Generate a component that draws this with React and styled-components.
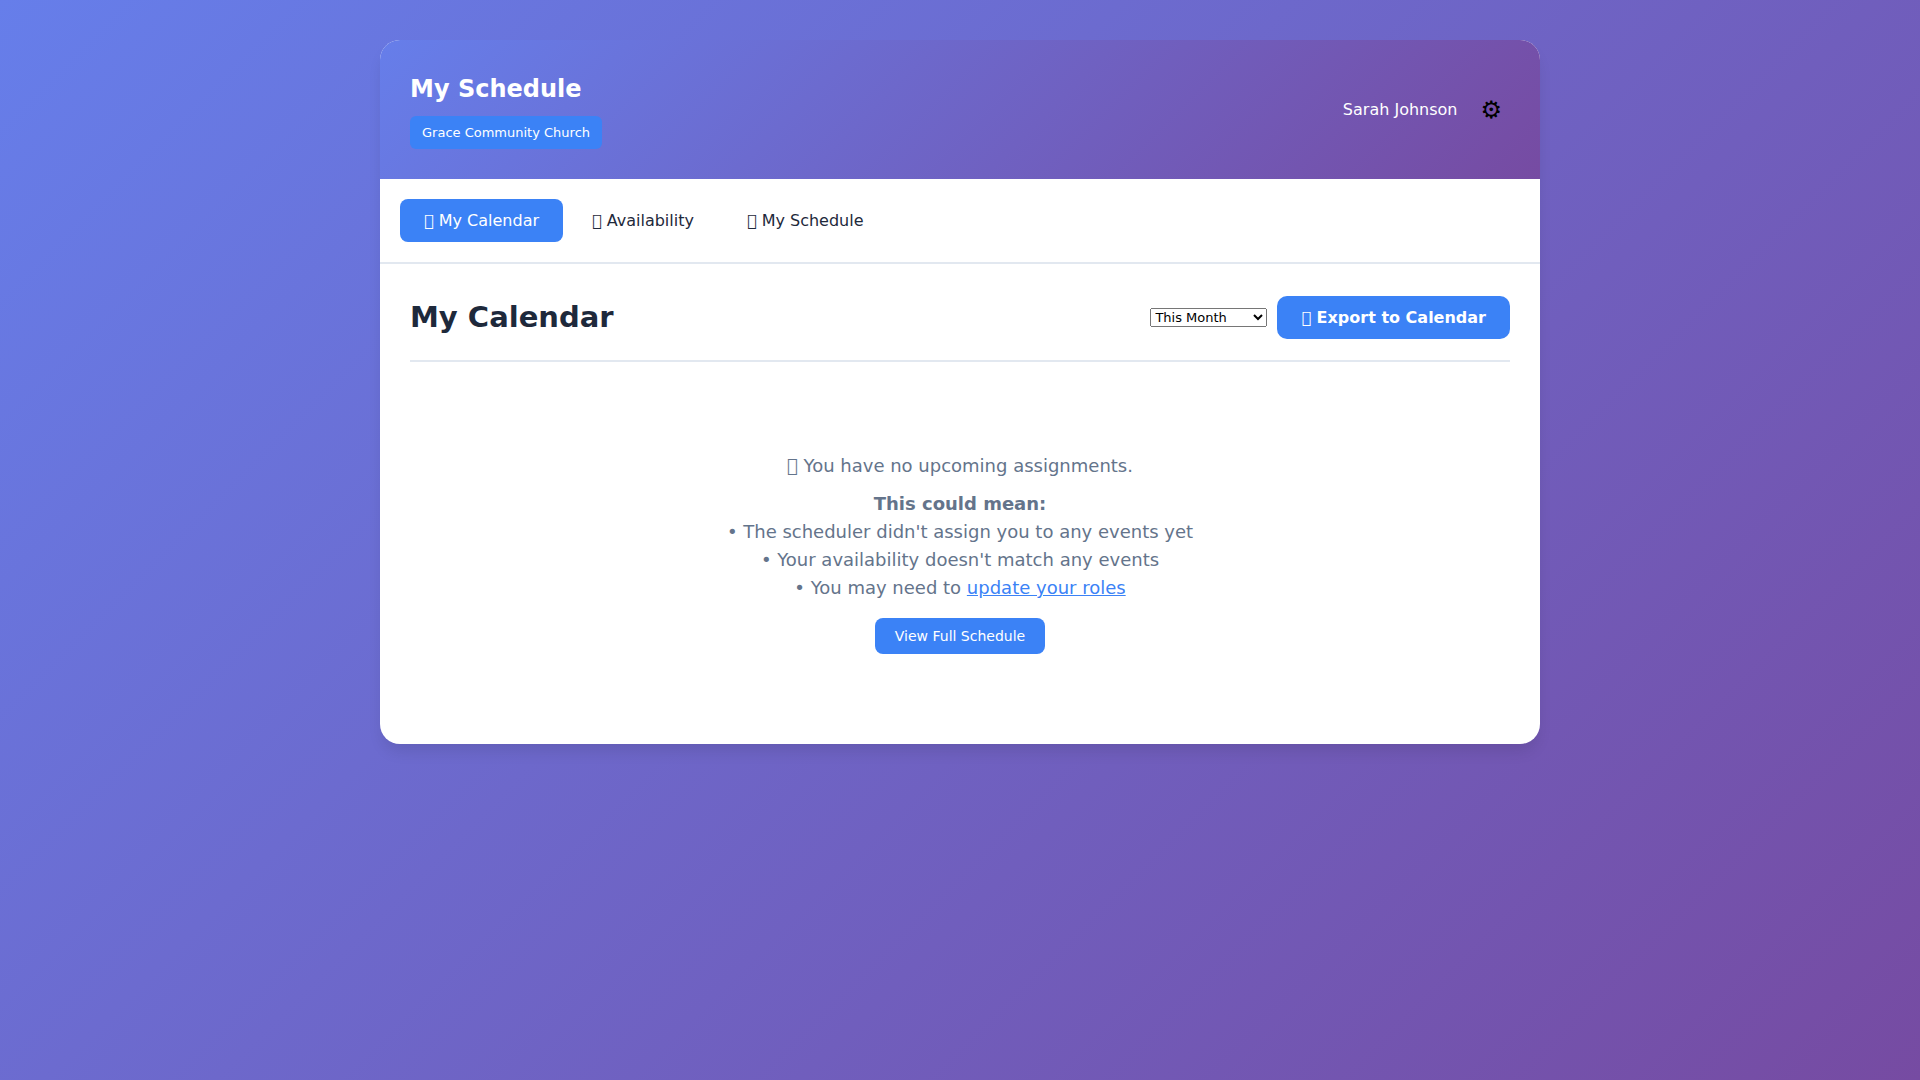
import React, { useState } from "react";
import styled, { createGlobalStyle } from "styled-components";

const GlobalStyle = createGlobalStyle`
  * {
    box-sizing: border-box;
    margin: 0;
    padding: 0;
  }

  body {
    min-height: 100vh;
    padding: 20px;
    background: linear-gradient(135deg, #667eea 0%, #764ba2 100%);
    color: #1e293b;
    font-family: "DejaVu Sans", sans-serif;
    font-size: 16px;
    line-height: 26px;
    text-rendering: optimizeLegibility;
  }

  button {
    border: none;
    cursor: pointer;
    font-family: inherit;
    line-height: normal;
    text-rendering: inherit;
  }
`;

const Container = styled.div`
  max-width: 1200px;
  margin: 0 auto;
  padding: 20px;
`;

const Card = styled.div`
  overflow: hidden;
  border-radius: 20px;
  background: #ffffff;
  box-shadow: 0 10px 15px -3px rgba(0, 0, 0, 0.1);
`;

const Header = styled.header`
  display: flex;
  align-items: center;
  justify-content: space-between;
  padding: 30px;
  background: linear-gradient(135deg, #667eea 0%, #764ba2 100%);
  color: #ffffff;
`;

const Brand = styled.div`
  display: flex;
  flex-direction: column;
  align-items: flex-start;
  gap: 8px;
`;

const Title = styled.h1`
  font-size: 24px;
  line-height: 38px;
`;

const OrgBadge = styled.span`
  padding: 6px 12px;
  border-radius: 6px;
  background: #3b82f6;
  font-size: 13px;
  line-height: 21px;
`;

const User = styled.div`
  display: flex;
  align-items: center;
  gap: 15px;
`;

const SettingsButton = styled.button`
  padding: 8px;
  background: none;
  color: #000000;
  font-size: 24px;
`;

const Tabs = styled.nav`
  display: flex;
  gap: 5px;
  padding: 20px;
  border-bottom: 2px solid #e2e8f0;
`;

const Tab = styled.button`
  padding: 12px 24px;
  border-radius: 8px;
  background: ${({ $active }) => ($active ? "#3b82f6" : "transparent")};
  color: ${({ $active }) => ($active ? "#ffffff" : "#1e293b")};
  font-size: 16px;
`;

const Content = styled.main`
  padding: 30px;
`;

const SectionHeader = styled.div`
  display: flex;
  align-items: center;
  justify-content: space-between;
  margin-bottom: 30px;
  padding-bottom: 20px;
  border-bottom: 2px solid #e2e8f0;
`;

const SectionTitle = styled.h2`
  font-size: 29px;
  line-height: 46px;
`;

const Actions = styled.div`
  display: flex;
  align-items: center;
  gap: 10px;
`;

const RangeSelect = styled.select`
  font-family: inherit;
  font-size: 13px;
`;

const ExportButton = styled.button`
  padding: 12px 24px;
  border-radius: 10px;
  background: #3b82f6;
  color: #ffffff;
  font-size: 16px;
  font-weight: 600;
`;

const EmptyState = styled.section`
  display: flex;
  flex-direction: column;
  align-items: center;
  gap: 10px;
  padding: 60px 20px;
  color: #64748b;
  font-size: 18px;
  line-height: 28px;
  text-align: center;
`;

const RolesLink = styled.a`
  color: #3b82f6;
  text-decoration: underline;
`;

const ScheduleButton = styled.button`
  margin-top: 6px;
  padding: 10px 20px;
  border-radius: 8px;
  background: #3b82f6;
  color: #ffffff;
  font-size: 14px;
`;

// Private-use code point: shows as the font's empty box.
const Icon = () => <span aria-hidden="true">{"\u{F0000}"}</span>;

const tabs = [
  { id: "calendar", label: "My Calendar" },
  { id: "availability", label: "Availability" },
  { id: "schedule", label: "My Schedule" },
];

export default function App() {
  const [activeTab, setActiveTab] = useState("calendar");

  return (
    <>
      <GlobalStyle />
      <Container>
        <Card>
          <Header>
            <Brand>
              <Title>My Schedule</Title>
              <OrgBadge>Grace Community Church</OrgBadge>
            </Brand>
            <User>
              <span>Sarah Johnson</span>
              <SettingsButton aria-label="Settings">⚙</SettingsButton>
            </User>
          </Header>
          <Tabs>
            {tabs.map((tab) => (
              <Tab
                key={tab.id}
                $active={tab.id === activeTab}
                onClick={() => setActiveTab(tab.id)}
              >
                <Icon /> {tab.label}
              </Tab>
            ))}
          </Tabs>
          <Content>
            <SectionHeader>
              <SectionTitle>My Calendar</SectionTitle>
              <Actions>
                <RangeSelect aria-label="Date range" defaultValue="month">
                  <option value="week">This Week</option>
                  <option value="month">This Month</option>
                  <option value="quarter">Next 3 Months</option>
                </RangeSelect>
                <ExportButton>
                  <Icon /> Export to Calendar
                </ExportButton>
              </Actions>
            </SectionHeader>
            <EmptyState>
              <p>
                <Icon /> You have no upcoming assignments.
              </p>
              <p>
                <strong>This could mean:</strong>
                <br />• The scheduler didn't assign you to any events yet
                <br />• Your availability doesn't match any events
                <br />• You may need to <RolesLink href="#roles">update your roles</RolesLink>
              </p>
              <ScheduleButton>View Full Schedule</ScheduleButton>
            </EmptyState>
          </Content>
        </Card>
      </Container>
    </>
  );
}
